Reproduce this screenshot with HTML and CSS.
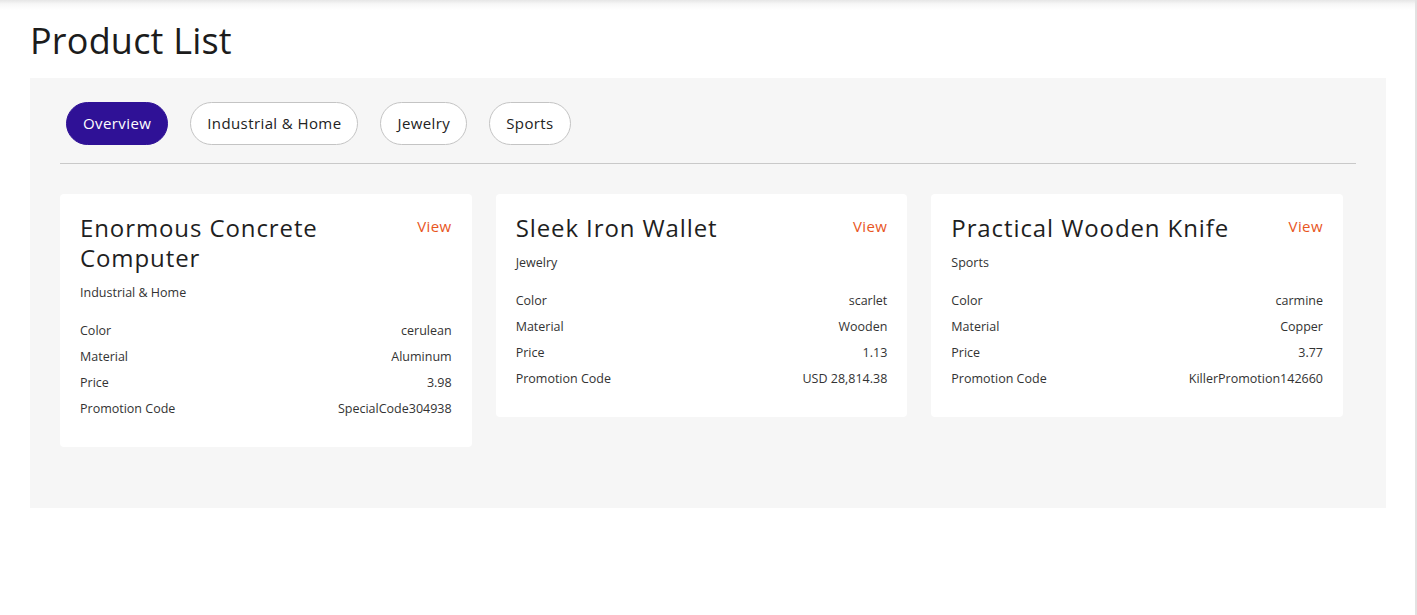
FILE: index.html
```html
<!DOCTYPE html>
<html lang="en">
<head>
<meta charset="utf-8">
<title>Product List</title>
<link rel="stylesheet" href="styles.css">
</head>
<body>
<div class="page">
  <h1 class="page-title">Product List</h1>
  <section class="panel">
    <nav class="tabs">
      <button class="tab tab-active">Overview</button>
      <button class="tab">Industrial &amp; Home</button>
      <button class="tab">Jewelry</button>
      <button class="tab">Sports</button>
    </nav>
    <div class="cards">
      <article class="card">
        <div class="card-head">
          <h2 class="card-title">Enormous Concrete Computer</h2>
          <a class="card-link">View</a>
        </div>
        <div class="card-cat">Industrial &amp; Home</div>
        <dl class="props">
          <div class="prop"><dt>Color</dt><dd>cerulean</dd></div>
          <div class="prop"><dt>Material</dt><dd>Aluminum</dd></div>
          <div class="prop"><dt>Price</dt><dd>3.98</dd></div>
          <div class="prop"><dt>Promotion Code</dt><dd>SpecialCode304938</dd></div>
        </dl>
      </article>
      <article class="card">
        <div class="card-head">
          <h2 class="card-title">Sleek Iron Wallet</h2>
          <a class="card-link">View</a>
        </div>
        <div class="card-cat">Jewelry</div>
        <dl class="props">
          <div class="prop"><dt>Color</dt><dd>scarlet</dd></div>
          <div class="prop"><dt>Material</dt><dd>Wooden</dd></div>
          <div class="prop"><dt>Price</dt><dd>1.13</dd></div>
          <div class="prop"><dt>Promotion Code</dt><dd>USD 28,814.38</dd></div>
        </dl>
      </article>
      <article class="card">
        <div class="card-head">
          <h2 class="card-title">Practical Wooden Knife</h2>
          <a class="card-link">View</a>
        </div>
        <div class="card-cat">Sports</div>
        <dl class="props">
          <div class="prop"><dt>Color</dt><dd>carmine</dd></div>
          <div class="prop"><dt>Material</dt><dd>Copper</dd></div>
          <div class="prop"><dt>Price</dt><dd>3.77</dd></div>
          <div class="prop"><dt>Promotion Code</dt><dd>KillerPromotion142660</dd></div>
        </dl>
      </article>
    </div>
  </section>
</div>
</body>
</html>
```
FILE: styles.css
```css
html {
  background: linear-gradient(#e6e6e6 0, #f7f7f7 4px, #ffffff 10px) no-repeat, #ffffff;
  border-right: 2px solid #e2e2e2;
  min-height: 100%;
}
body {
  margin: 0;
  font-family: "Open Sans", "Noto Sans", sans-serif;
  color: #222;
}
.page {
  padding: 19px 29px 0 30px;
}
.page-title {
  margin: 0 0 15px 0;
  font-size: 36px;
  line-height: 44px;
  font-weight: 400;
  color: #1c1c1c;
  letter-spacing: 0.2px;
}
.panel {
  background: #f6f6f6;
  padding: 24px 30px 61px 30px;
}
.tabs {
  display: flex;
  gap: 22px;
  padding: 0 6px 18px 6px;
  border-bottom: 1px solid #c9c9c9;
}
.tab {
  height: 43px;
  padding: 0 16px 2px 16px;
  border: 1px solid #c4c4c4;
  border-radius: 22px;
  background: #fff;
  font-family: inherit;
  font-size: 15px;
  letter-spacing: 0.4px;
  color: #222;
  cursor: pointer;
}
.tab-active {
  background: #2f1196;
  border-color: #2f1196;
  color: #fff;
}
.cards {
  display: grid;
  grid-template-columns: repeat(3, 1fr);
  gap: 24px;
  padding: 30px 13px 0 0;
  align-items: start;
}
.card {
  background: #fff;
  border-radius: 4px;
  padding: 19px 20px 25px 20px;
}
.card-head {
  display: flex;
  justify-content: space-between;
  align-items: flex-start;
  gap: 16px;
}
.card-title {
  margin: 0;
  font-size: 24px;
  line-height: 30px;
  font-weight: 400;
  color: #1f1f1f;
  letter-spacing: 0.9px;
}
.card-link {
  font-size: 15px;
  line-height: 26px;
  letter-spacing: 0.4px;
  color: #e8561e;
  cursor: pointer;
}
.card-cat {
  margin-top: 12px;
  font-size: 12.5px;
  line-height: 16px;
  color: #333;
}
.props {
  margin: 17px 0 0 0;
}
.prop {
  display: flex;
  justify-content: space-between;
  font-size: 12.5px;
  line-height: 26px;
  color: #333;
}
.prop dt, .prop dd {
  margin: 0;
}
```
